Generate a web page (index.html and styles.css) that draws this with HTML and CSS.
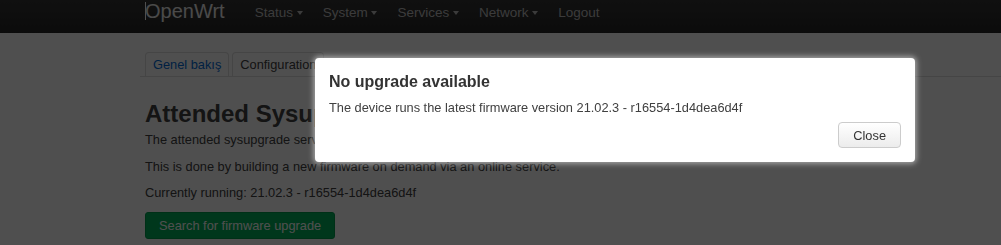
FILE: index.html
```html
<!DOCTYPE html>
<html lang="tr">
<head>
    <meta charset="UTF-8">
    <meta name="viewport" content="width=device-width, initial-scale=1.0">
    <title>Attended Sysupgrade - OpenWrt</title>
    <link rel="stylesheet" href="styles.css">
</head>
<body>
    <header class="navbar">
        <div class="nav-inner">
            <a class="brand" href="#">OpenWrt</a>
            <ul class="nav">
                <li><a href="#">Status <span class="caret"></span></a></li>
                <li><a href="#">System <span class="caret"></span></a></li>
                <li><a href="#">Services <span class="caret"></span></a></li>
                <li><a href="#">Network <span class="caret"></span></a></li>
                <li><a href="#">Logout</a></li>
            </ul>
        </div>
    </header>

    <div class="main">
        <ul class="tabs">
            <li class="active"><a href="#">Genel bakış</a></li>
            <li><a href="#">Configuration</a></li>
        </ul>

        <h2>Attended Sysupgrade</h2>
        <p>The attended sysupgrade service allows to easily upgrade vanilla and custom firmware images.</p>
        <p>This is done by building a new firmware on demand via an online service.</p>
        <p>Currently running: 21.02.3 - r16554-1d4dea6d4f</p>
        <button type="button" class="btn-positive">Search for firmware upgrade</button>
    </div>

    <div class="overlay">
        <div class="modal">
            <h4>No upgrade available</h4>
            <p>The device runs the latest firmware version 21.02.3 - r16554-1d4dea6d4f</p>
            <div class="modal-footer">
                <button type="button" class="btn">Close</button>
            </div>
        </div>
    </div>
</body>
</html>
```

FILE: styles.css
```css
body {
    font-family: "Liberation Sans", Arial, sans-serif;
    font-size: 12.8px;
    margin: 0;
    padding: 0;
    background-color: #fff;
    color: #404040;
}

a {
    text-decoration: none;
}

/* header */
.navbar {
    height: 33px;
    background: linear-gradient(#353535, #262626);
}
.nav-inner {
    display: flex;
    padding-left: 145px;
}
.brand {
    font-size: 20px;
    line-height: 23px;
    color: #eee;
    padding-right: 20px;
}
.brand::before {
    content: "";
    display: inline-block;
    width: 1px;
    height: 18px;
    margin-right: -1px;
    vertical-align: -2px;
    background-color: #fff;
}
.nav {
    display: flex;
    list-style: none;
    margin: 0;
    padding: 0;
}
.nav a {
    display: block;
    font-size: 13.5px;
    line-height: 20px;
    padding: 3px 10px 10px;
    color: #bfbfbf;
}
.caret {
    display: inline-block;
    width: 0;
    height: 0;
    vertical-align: middle;
    border-top: 4px solid #bfbfbf;
    border-left: 3.5px solid transparent;
    border-right: 3.5px solid transparent;
}

/* page content */
.main {
    padding-left: 145px;
}
.tabs {
    display: flex;
    list-style: none;
    margin: 19px 0 0 -5px;
    padding: 0 0 0 5px;
    border-bottom: 1px solid #ddd;
}
.tabs li {
    margin-right: 3px;
}
.tabs a {
    display: block;
    padding: 0 7px;
    line-height: 23px;
    border: 1px solid #ddd;
    border-bottom: none;
    border-radius: 4px 4px 0 0;
    color: #404040;
}
.tabs .active a {
    color: #0069d6;
}
h2 {
    font-size: 24px;
    line-height: 28px;
    margin: 23px 0 3px;
    color: #404040;
}
.main p {
    line-height: 18px;
    margin: 0 0 8.5px;
}
.btn-positive {
    margin-top: 1px;
    height: 27px;
    padding: 0 13px;
    font-family: inherit;
    font-size: 12.8px;
    color: #fff;
    background-color: #00b35a;
    border: 1px solid #009a4c;
    border-radius: 3px;
}

/* modal dialog over a dark backdrop */
.overlay {
    position: fixed;
    top: 0;
    left: 0;
    right: 0;
    bottom: 0;
    padding-top: 58px;
    background-color: rgba(0, 0, 0, 0.69);
}
.modal {
    width: 600px;
    box-sizing: border-box;
    margin-left: 315px;
    padding: 14px;
    background-color: #fff;
    border-radius: 4px;
    box-shadow: 0 0 5px 2px rgba(255, 255, 255, 0.45);
}
.modal h4 {
    margin: 0 0 7px;
    font-size: 16px;
    line-height: 20px;
    color: #333;
}
.modal p {
    margin: 0 0 5px;
    line-height: 18px;
    color: #404040;
}
.modal-footer {
    display: flex;
    justify-content: flex-end;
}
.btn {
    height: 26px;
    padding: 0 14px;
    font-family: inherit;
    font-size: 12.8px;
    color: #333;
    background: linear-gradient(#fff, #ececec);
    border: 1px solid #ccc;
    border-radius: 4px;
}
```
